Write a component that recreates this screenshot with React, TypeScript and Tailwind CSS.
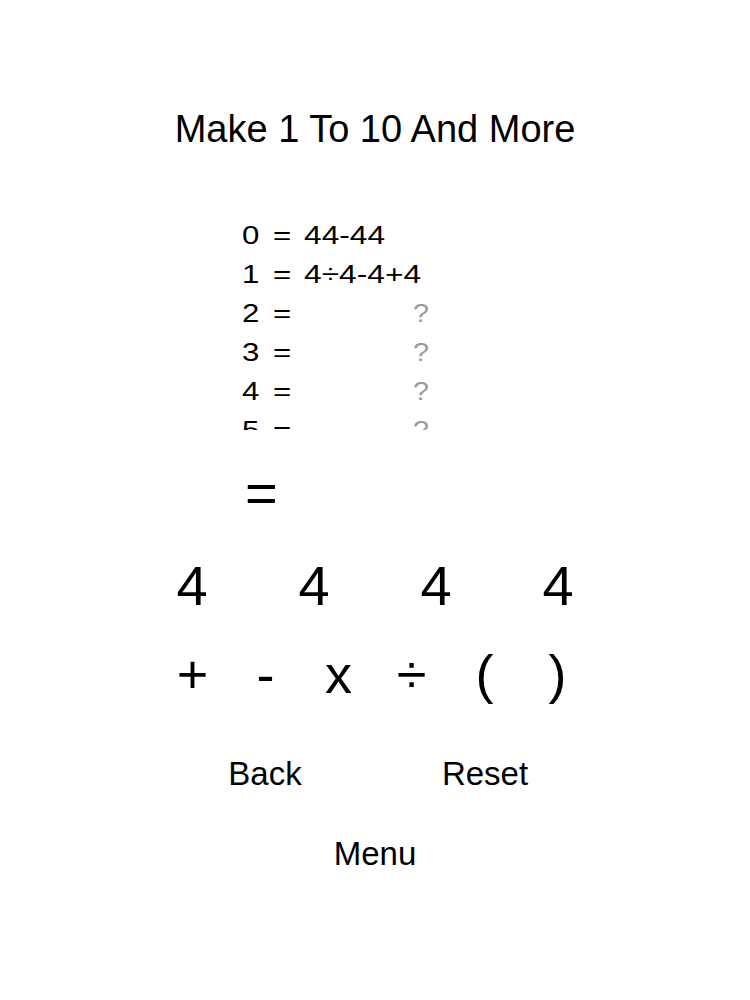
const rows: { n: number; expr: string | null }[] = [
  { n: 0, expr: '44-44' },
  { n: 1, expr: '4÷4-4+4' },
  { n: 2, expr: null },
  { n: 3, expr: null },
  { n: 4, expr: null },
  { n: 5, expr: null },
  { n: 6, expr: null },
  { n: 7, expr: null },
  { n: 8, expr: null },
  { n: 9, expr: null },
  { n: 10, expr: null },
];

const fours = ['4', '4', '4', '4'];
const ops = ['+', '-', 'x', '÷', '(', ')'];

export default function App() {
  return (
    <div
      className="w-[750px] h-[1000px] bg-white text-black flex flex-col items-center"
      style={{ fontFamily: '"Liberation Sans", Arial, sans-serif' }}
    >
      <h1 className="mt-[110px] text-[38px] leading-[38px] font-normal">Make 1 To 10 And More</h1>

      {/* solved list, scrolls */}
      <div className="mt-[68px] w-full h-[214px] overflow-hidden">
        {rows.map((row) => (
          <div key={row.n} className="flex h-[39px] items-center text-[26px] leading-[39px]">
            <div className="w-[259px] text-right">
              <span className="inline-block origin-right scale-x-[1.2]">{row.n}</span>
            </div>
            <div className="w-[45px] pl-[14px]">
              <span className="inline-block origin-left scale-x-[1.2]">=</span>
            </div>
            {row.expr ? (
              <span className="inline-block origin-left scale-x-[1.22]">{row.expr}</span>
            ) : (
              <span className="ml-[109px] inline-block origin-left scale-x-[1.1] text-[#9a9a9a]">?</span>
            )}
          </div>
        ))}
      </div>

      <div className="mt-[35px] w-full h-[56px] pl-[245px] text-[56px] leading-[56px]">=</div>

      <div className="mt-[37px] grid w-[488px] grid-cols-4 text-[56px] leading-[56px]">
        {fours.map((d, i) => (
          <button key={i} className="text-center">
            {d}
          </button>
        ))}
      </div>

      <div className="mt-[32px] grid w-[438px] grid-cols-6 text-[54px] leading-[56px]">
        {ops.map((o) => (
          <button key={o} className="text-center">
            {o}
          </button>
        ))}
      </div>

      <div className="mt-[52px] grid w-[440px] grid-cols-2 text-[33px] leading-[40px]">
        <button className="text-center">Back</button>
        <button className="text-center">Reset</button>
      </div>

      <button className="mt-[40px] text-[33px] leading-[40px]">Menu</button>
    </div>
  );
}
